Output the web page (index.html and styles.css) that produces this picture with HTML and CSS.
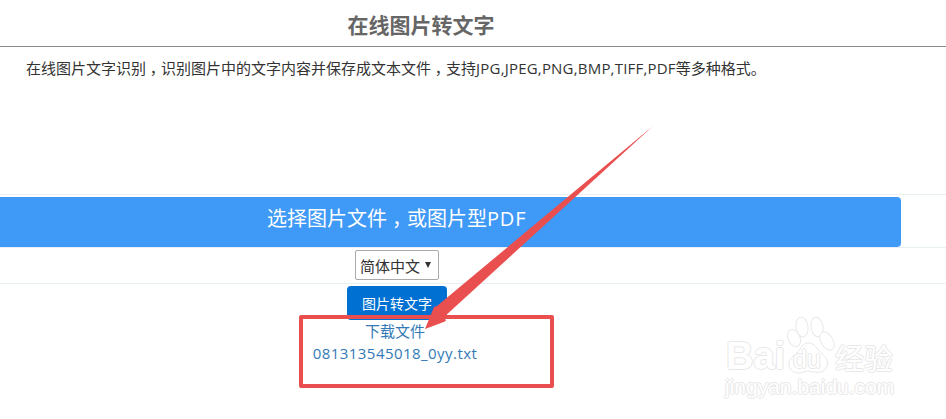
FILE: index.html
```html
<!DOCTYPE html>
<html lang="zh-CN">
<head>
    <meta charset="UTF-8">
    <title>在线图片转文字</title>
    <link rel="stylesheet" href="styles.css">
</head>
<body>
    <div class="page-head">
        <h1>在线图片转文字</h1>
    </div>
    <p class="intro">在线图片文字识别<span class="comma">，</span>识别图片中的文字内容并保存成文本文件<span class="comma">，</span>支持<span class="latin">JPG,JPEG,PNG,BMP,TIFF,PDF</span>等多种格式。</p>

    <div class="row row-file">
        <div class="file-btn">选择图片文件<span class="comma comma-big">，</span>或图片型<span class="latin-big">PDF</span></div>
    </div>
    <div class="row row-lang">
        <div class="lang-select">简体中文<span class="caret"></span></div>
    </div>
    <div class="row-submit">
        <button class="submit-btn">图片转文字</button>
    </div>
    <div class="result">
        <a class="result-title">下载文件</a>
        <a class="result-file">081313545018_0yy.txt</a>
    </div>

    <!-- 标注 -->
    <div class="mark-box"></div>
    <svg class="mark-arrow" width="946" height="419" viewBox="0 0 946 419">
        <polygon points="653,126 444,317 446,321 441,323 425,329 434,307 437,306" fill="#ea4f50"/>
    </svg>

    <!-- 水印 -->
    <div class="watermark">
        <svg class="paw" width="52" height="60" viewBox="0 0 52 60">
            <g fill="#fff" stroke="#e8e8e8" stroke-width="1">
                <ellipse cx="11" cy="22" rx="6" ry="9" transform="rotate(-25 11 22)"/>
                <ellipse cx="19" cy="11" rx="6" ry="10" transform="rotate(-8 19 11)"/>
                <ellipse cx="34" cy="11" rx="6" ry="10" transform="rotate(-10 34 11)"/>
                <ellipse cx="44" cy="25" rx="6" ry="10" transform="rotate(-30 44 25)"/>
                <path d="M25 27c7 0 9 6 13 10 5 4 8 8 6 13-2 6-8 7-13 6-2 0-4-1-6-1s-5 2-9 2c-6 0-11-4-10-10 0-5 5-7 8-10 4-4 5-10 11-10z"/>
            </g>
        </svg>
        <span class="wm-bai">Bai</span>
        <span class="wm-du">du</span>
        <span class="wm-cn">经验</span>
        <span class="wm-url">jingyan.baidu.com</span>
    </div>
</body>
</html>
```

FILE: styles.css
```css
body {
    margin: 0;
    height: 419px;
    overflow: hidden;
    position: relative;
    background: #fff;
    color: #333;
    font-family: "Open Sans", "Noto Sans CJK SC", sans-serif;
    font-size: 15px;
}
.page-head {
    height: 46px;
    border-bottom: 1px solid #888;
    display: flex;
    justify-content: center;
    padding-right: 104px;
}
.page-head h1 {
    margin: 11px 0 0;
    font-size: 21px;
    line-height: 28px;
    font-weight: 700;
    color: #666;
}
.intro {
    margin: 11px 0 0 26px;
    height: 136px;
    line-height: 20px;
    font-size: 15px;
}
.latin {
    letter-spacing: 0.2px;
}
.latin-big {
    letter-spacing: 0.8px;
}
.comma {
    font-feature-settings: "halt";
    padding: 0 3.75px;
}
.comma-big {
    padding: 0 5px;
}
.row {
    border-top: 1px solid #e9f0f3;
}
.row-file {
    padding-top: 2px;
    height: 50px;
}
.file-btn {
    width: 901px;
    height: 50px;
    background: #3f99f7;
    border-radius: 0 4px 4px 0;
    color: #fff;
    font-size: 20px;
    line-height: 44px;
    box-sizing: border-box;
    padding-left: 267px;
}
.row-lang {
    display: flex;
    padding-left: 355px;
    padding-top: 2px;
    box-sizing: border-box;
    height: 36px;
}
.lang-select {
    width: 84px;
    height: 30px;
    border: 1px solid #aaa;
    border-radius: 2px;
    box-sizing: border-box;
    padding-left: 4px;
    font-size: 15px;
    display: flex;
    align-items: center;
    gap: 5px;
}
.caret {
    width: 0;
    height: 0;
    border-left: 3.5px solid transparent;
    border-right: 3.5px solid transparent;
    border-top: 6px solid #333;
}
.row-submit {
    border-top: 1px solid #e9f0f3;
    padding: 2px 0 0 347px;
    height: 34px;
}
.submit-btn {
    display: block;
    width: 100px;
    height: 34px;
    background: #0070d2;
    border: none;
    border-radius: 4px;
    color: #fff;
    font-size: 14px;
    font-family: inherit;
    padding: 0;
}
.result {
    display: flex;
    flex-direction: column;
    margin-left: 313px;
    width: 164px;
    align-items: center;
    color: #337ab7;
    font-size: 15px;
    line-height: 22px;
    white-space: nowrap;
}
.result-file {
    letter-spacing: 0.45px;
}
.mark-box {
    position: absolute;
    left: 299px;
    top: 315px;
    width: 255px;
    height: 73px;
    border: 4px solid #ea4f50;
    border-radius: 2px;
    box-sizing: border-box;
}
.mark-arrow {
    position: absolute;
    left: 0;
    top: 0;
}
.watermark {
    position: absolute;
    left: 724px;
    top: 316px;
    width: 180px;
    height: 86px;
    color: #fff;
    font-family: "Liberation Sans", sans-serif;
    text-shadow: -1px 0 #e8e8e8, 1px 0 #e8e8e8, 0 -1px #e8e8e8, 0 1px #e8e8e8;
}
.paw {
    position: absolute;
    left: 59px;
    top: 0;
}
.wm-bai {
    position: absolute;
    left: 2px;
    top: 18px;
    font-size: 38px;
    line-height: 44px;
    font-weight: 700;
}
.wm-du {
    position: absolute;
    left: 69px;
    top: 28px;
    font-size: 25px;
    line-height: 30px;
}
.wm-cn {
    position: absolute;
    left: 111px;
    top: 22px;
    font-size: 29px;
    line-height: 38px;
    font-family: "Noto Sans CJK SC", sans-serif;
}
.wm-url {
    position: absolute;
    left: 1px;
    top: 59px;
    font-size: 21px;
    line-height: 24px;
}
```
